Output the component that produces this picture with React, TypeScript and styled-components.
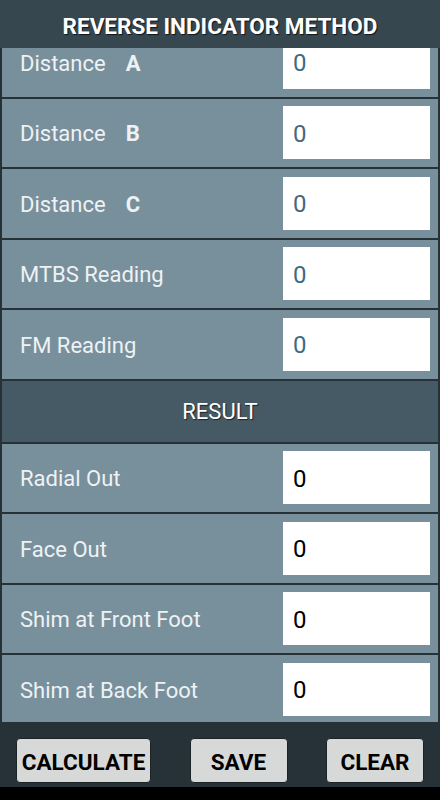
import { useLayoutEffect, useRef } from "react";
import styled, { createGlobalStyle } from "styled-components";

const GlobalStyle = createGlobalStyle`
  html, body {
    margin: 0;
    padding: 0;
    background: #000000;
  }
  * {
    box-sizing: border-box;
  }
`;

interface Field {
  label: string;
  suffix?: string;
  value: string;
}

const inputFields: Field[] = [
  { label: "Distance", suffix: "A", value: "0" },
  { label: "Distance", suffix: "B", value: "0" },
  { label: "Distance", suffix: "C", value: "0" },
  { label: "MTBS Reading", value: "0" },
  { label: "FM Reading", value: "0" }
];

const resultFields: Field[] = [
  { label: "Radial Out", value: "0" },
  { label: "Face Out", value: "0" },
  { label: "Shim at Front Foot", value: "0" },
  { label: "Shim at Back Foot", value: "0" }
];

const App = () => {
  const listRef = useRef<HTMLDivElement>(null);

  useLayoutEffect(() => {
    if (listRef.current) listRef.current.scrollTop = 20;
  }, []);

  return (
    <Screen>
      <GlobalStyle />
      <Header>REVERSE INDICATOR METHOD</Header>
      <List ref={listRef}>
        {inputFields.map((f, i) => (
          <FieldRow key={"in" + i}>
            <Label>
              {f.label}
              {f.suffix && <Suffix>{f.suffix}</Suffix>}
            </Label>
            <ValueBox readOnly value={f.value} tone="input" />
          </FieldRow>
        ))}
        <SectionTitle>RESULT</SectionTitle>
        {resultFields.map((f, i) => (
          <FieldRow key={"out" + i}>
            <Label>{f.label}</Label>
            <ValueBox readOnly value={f.value} tone="result" />
          </FieldRow>
        ))}
      </List>
      <ButtonBar>
        <ActionButton type="button" $width={135}>
          CALCULATE
        </ActionButton>
        <ActionButton type="button" $width={98}>
          SAVE
        </ActionButton>
        <ActionButton type="button" $width={98}>
          CLEAR
        </ActionButton>
      </ButtonBar>
      <NavStrip />
    </Screen>
  );
};

const Screen = styled.div`
  width: 440px;
  height: 800px;
  display: flex;
  flex-direction: column;
  background: #263238;
  font-family: Roboto, "Liberation Sans", sans-serif;
  overflow: hidden;
`;

const Header = styled.div`
  height: 48px;
  flex-shrink: 0;
  display: flex;
  align-items: center;
  justify-content: center;
  background: #37474f;
  color: #ffffff;
  font-size: 22.5px;
  font-weight: bold;
  text-shadow: 1px 1px 1px rgba(0, 0, 0, 0.7);
  padding-top: 3px;
`;

const List = styled.div`
  flex: 1;
  min-height: 0;
  overflow-y: auto;
  display: flex;
  flex-direction: column;
  gap: 2px;
  padding: 0 2px 2px 2px;
  scrollbar-width: none;
  &::-webkit-scrollbar {
    display: none;
  }
`;

const FieldRow = styled.div`
  flex-shrink: 0;
  height: 68.5px;
  display: flex;
  align-items: center;
  justify-content: space-between;
  background: #78909c;
  padding: 0 8px 0 18px;
`;

const Label = styled.div`
  color: #eef2f4;
  font-size: 22px;
  display: flex;
  align-items: baseline;
  padding-top: 2px;
`;

const Suffix = styled.span`
  font-weight: bold;
  margin-left: 20px;
`;

const ValueBox = styled.input<{ tone: "input" | "result" }>`
  width: 147px;
  height: 53px;
  border: none;
  outline: none;
  background: #ffffff;
  padding: 2px 0 0 10px;
  font-family: Roboto, "Liberation Sans", sans-serif;
  font-size: 24px;
  color: ${({ tone }) => (tone === "input" ? "#3f6a80" : "#000000")};
`;

const SectionTitle = styled.div`
  flex-shrink: 0;
  height: 61px;
  display: flex;
  align-items: center;
  justify-content: center;
  background: #455a64;
  color: #ffffff;
  font-size: 22px;
  text-shadow: 1px 1px 1px rgba(0, 0, 0, 0.6);
`;

const ButtonBar = styled.div`
  height: 65px;
  flex-shrink: 0;
  display: flex;
  align-items: flex-start;
  justify-content: space-between;
  padding: 16px 16px 0 16px;
  background: #263238;
`;

const ActionButton = styled.button<{ $width: number }>`
  width: ${({ $width }) => $width}px;
  height: 45px;
  background: #d7d8d8;
  border: 1px solid #1c2327;
  border-radius: 4px;
  font-family: Roboto, "Liberation Sans", sans-serif;
  font-size: 22.5px;
  font-weight: bold;
  color: #000000;
  padding: 3px 0 0 0;
`;

const NavStrip = styled.div`
  height: 13px;
  flex-shrink: 0;
  background: #000000;
`;

export default App;
